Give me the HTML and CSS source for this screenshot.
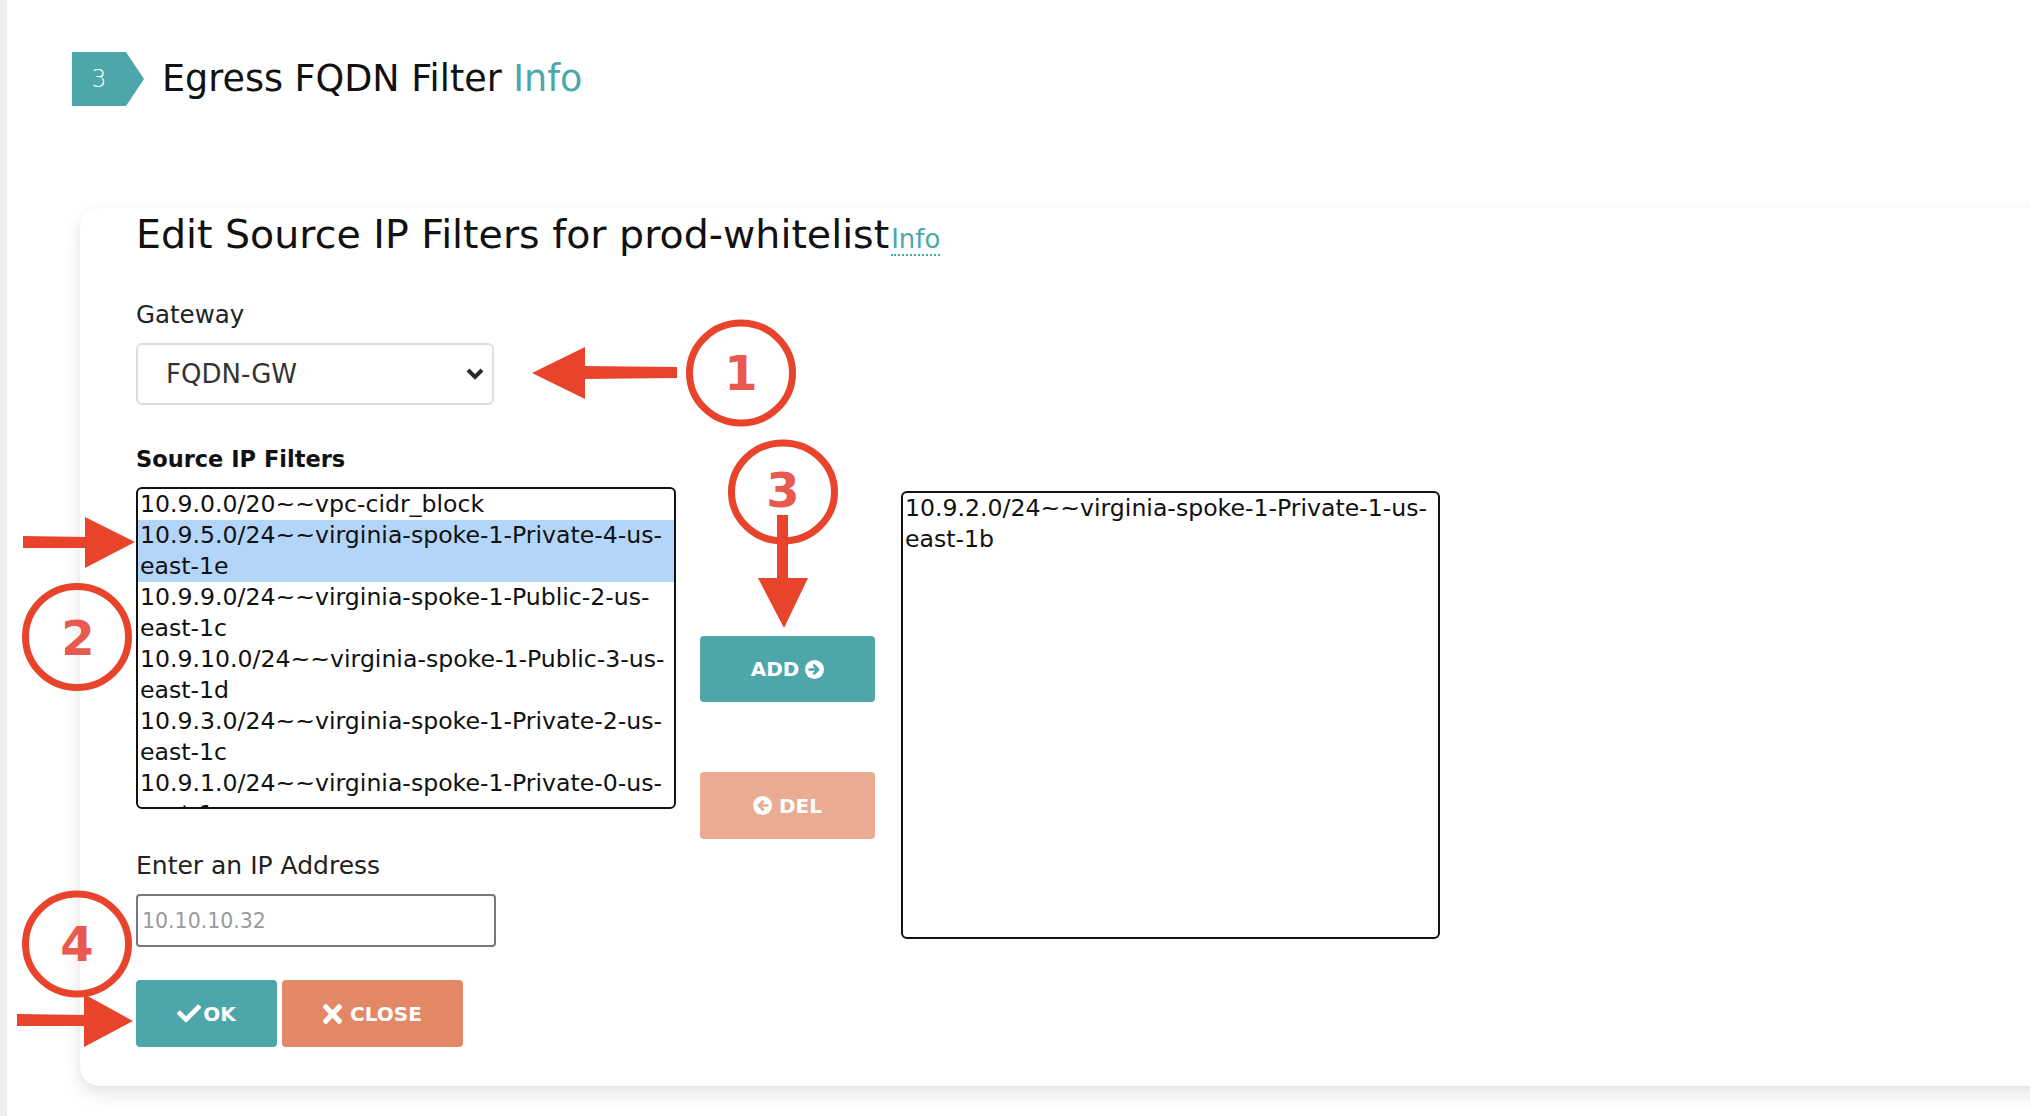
FILE: index.html
```html
<!DOCTYPE html>
<html>
<head>
<meta charset="utf-8">
<title>Egress FQDN Filter</title>
<link rel="stylesheet" href="styles.css">
</head>
<body>
<div class="page">
  <div class="stripe"></div>
  <div class="main">
    <header class="step">
      <div class="badge">3</div>
      <h1 class="step-title">Egress FQDN Filter <span class="info">Info</span></h1>
    </header>

    <section class="card">
      <h2 class="card-title">Edit Source IP Filters for prod-whitelist<a class="info-link">Info</a></h2>

      <div class="field">
        <label class="label">Gateway</label>
        <div class="select">
          <span>FQDN-GW</span>
          <svg class="chev" width="18" height="12" viewBox="0 0 18 12"><polyline points="2,2 9,9 16,2" fill="none" stroke="#2b2b2b" stroke-width="4"/></svg>
        </div>
      </div>

      <div class="filters">
        <div class="col-left">
          <div class="label-bold">Source IP Filters</div>
          <div class="listbox left">
            <div class="opt">10.9.0.0/20~~vpc-cidr_block</div>
            <div class="opt sel">10.9.5.0/24~~virginia-spoke-1-Private-4-us-<br>east-1e</div>
            <div class="opt">10.9.9.0/24~~virginia-spoke-1-Public-2-us-<br>east-1c</div>
            <div class="opt">10.9.10.0/24~~virginia-spoke-1-Public-3-us-<br>east-1d</div>
            <div class="opt">10.9.3.0/24~~virginia-spoke-1-Private-2-us-<br>east-1c</div>
            <div class="opt">10.9.1.0/24~~virginia-spoke-1-Private-0-us-<br>east-1a</div>
          </div>
          <label class="label ip-label">Enter an IP Address</label>
          <input class="ip-input" type="text" placeholder="10.10.10.32">
          <div class="actions">
            <button class="btn ok">
              <svg width="24" height="19" viewBox="0 64 512 384"><path fill="#fff" d="M173.898 439.404l-166.4-166.4c-9.997-9.997-9.997-26.206 0-36.204l36.203-36.204c9.997-9.998 26.207-9.998 36.204 0L192 312.69 432.095 72.596c9.997-9.997 26.207-9.997 36.204 0l36.203 36.204c9.997 9.997 9.997 26.206 0 36.204l-294.4 294.401c-9.998 9.997-26.207 9.997-36.204-.001z"/></svg>
              <span>OK</span>
            </button>
            <button class="btn close">
              <svg width="19" height="22" viewBox="0 64 352 384" preserveAspectRatio="none"><path fill="#fff" d="M242.72 256l100.07-100.07c12.28-12.28 12.28-32.19 0-44.48l-22.24-22.24c-12.28-12.28-32.19-12.28-44.48 0L176 189.28 75.93 89.21c-12.28-12.28-32.19-12.28-44.48 0L9.21 111.45c-12.28 12.28-12.28 32.19 0 44.48L109.28 256 9.21 356.07c-12.28 12.28-12.28 32.19 0 44.48l22.24 22.24c12.28 12.28 32.2 12.28 44.48 0L176 322.72l100.07 100.07c12.28 12.28 32.2 12.28 44.48 0l22.24-22.24c12.28-12.28 12.28-32.19 0-44.48L242.72 256z"/></svg>
              <span>CLOSE</span>
            </button>
          </div>
        </div>

        <div class="col-mid">
          <button class="btn add">
            <span>ADD</span>
            <svg width="19" height="19" viewBox="0 0 20 20"><circle cx="10" cy="10" r="10" fill="#fff"/><path d="M4.8 10h8.6M9.6 5.8l4.2 4.2-4.2 4.2" fill="none" stroke="#4da6a9" stroke-width="2.8" stroke-linecap="round" stroke-linejoin="round"/></svg>
          </button>
          <button class="btn del">
            <svg width="19" height="19" viewBox="0 0 20 20"><circle cx="10" cy="10" r="10" fill="#fff"/><path d="M15.2 10H6.6M10.4 5.8L6.2 10l4.2 4.2" fill="none" stroke="#e9ab91" stroke-width="2.8" stroke-linecap="round" stroke-linejoin="round"/></svg>
            <span>DEL</span>
          </button>
        </div>

        <div class="listbox right">
          <div class="opt">10.9.2.0/24~~virginia-spoke-1-Private-1-us-<br>east-1b</div>
        </div>
      </div>
    </section>
  </div>
</div>

<svg class="annotations" width="2030" height="1116" viewBox="0 0 2030 1116">
  <g fill="none" stroke="#e8432b" stroke-width="7">
    <ellipse cx="741" cy="373" rx="51.5" ry="50"/>
    <ellipse cx="77" cy="637" rx="51.5" ry="50.5"/>
    <ellipse cx="783" cy="492" rx="51.5" ry="49"/>
    <ellipse cx="77" cy="944" rx="51.5" ry="50"/>
  </g>
  <g fill="#e8432b">
    <polygon points="677,367 677,378 582,379 582,366"/>
    <polygon points="532,373 585,347 585,399"/>
    <polygon points="23,536 86,537 86,548 23,548"/>
    <polygon points="85,517 135,542 85,568"/>
    <polygon points="777,515 788,515 788,580 777,580"/>
    <polygon points="758,578 808,578 784,628"/>
    <polygon points="17,1014 86,1015 86,1026 17,1026"/>
    <polygon points="84,994 133,1021 84,1047"/>
  </g>
  <g fill="#e85a4f" font-family="DejaVu Sans, sans-serif" font-weight="bold" font-size="48" text-anchor="middle">
    <text x="741" y="390">1</text>
    <text x="78" y="655">2</text>
    <text x="783" y="507">3</text>
    <text x="77" y="961">4</text>
  </g>
</svg>
</body>
</html>
```

FILE: styles.css
```css
* { box-sizing: border-box; }
html, body { margin: 0; padding: 0; overflow: hidden; background: #fff; }
body {
  position: relative;
  width: 2030px;
  height: 1116px;
  font-family: "DejaVu Sans", sans-serif;
  color: #111;
}
.page { display: flex; min-height: 1116px; }
.stripe { width: 7px; flex: none; background: #efeeea; }
.main { flex: 1; min-width: 0; }

.step { display: flex; align-items: center; height: 54px; margin: 52px 0 0 65px; }
.badge {
  width: 72px; height: 54px; flex: none;
  background: #4da6a9;
  clip-path: polygon(0 0, 54px 0, 72px 27px, 54px 54px, 0 54px);
  color: #fff; font-size: 24px; font-weight: 200;
  display: flex; align-items: center; justify-content: center;
  padding-right: 18px;
}
.step-title { margin: 0 0 0 18px; font-size: 36.5px; font-weight: 400; line-height: 56px; color: #111; white-space: nowrap; }
.info { color: #4aa8ab; }

.card {
  margin: 102px 0 0 73px;
  width: 2100px;
  padding: 2px 0 39px 56px;
  border-radius: 20px;
  background: #fff;
  box-shadow: 0 8px 18px rgba(0,0,0,0.10), 0 0 8px rgba(0,0,0,0.03);
}
.card-title { margin: 0; font-size: 39.5px; font-weight: 400; line-height: 48px; color: #111; white-space: nowrap; }
.info-link { font-size: 26px; color: #4aa8ab; border-bottom: 2px dotted #4aa8ab; margin-left: 2px; }

.field { margin-top: 37px; }
.label { display: block; font-size: 24.5px; line-height: 30px; color: #222; }
.select {
  margin-top: 13px; width: 358px; height: 62px;
  border: 2px solid #dedede; border-radius: 6px;
  display: flex; align-items: center; justify-content: space-between;
  padding: 0 8px 0 28px;
  font-size: 26px; color: #333;
}

.filters { display: flex; align-items: flex-start; margin-top: 40px; }
.col-left { width: 540px; flex: none; }
.label-bold { font-size: 22.5px; font-weight: 700; line-height: 28px; color: #111; }
.listbox {
  border: 2px solid #111; border-radius: 6px; overflow: hidden;
  font-size: 23.6px; line-height: 31px; color: #111; background: #fff;
}
.listbox.left { margin-top: 14px; height: 322px; }
.opt { padding: 0 2px; white-space: nowrap; }
.opt.sel { background: #b4d5fa; }

.ip-label { margin-top: 42px; font-size: 25px; }
.ip-input {
  display: block; margin-top: 13px; width: 360px; height: 53px;
  border: 2px solid #777; border-radius: 4px; padding: 0 4px;
  font-family: inherit; font-size: 20.5px; color: #111; background: #fff; outline: none;
}
.ip-input::placeholder { color: #9a9a9a; }

.actions { display: flex; gap: 5px; margin-top: 33px; }
.btn {
  border: 0; border-radius: 4px; color: #fff;
  font-family: "DejaVu Sans", sans-serif; font-weight: 700; font-size: 20px;
  display: flex; align-items: center; justify-content: center;
  padding: 0; height: 67px;
}
.ok { width: 141px; background: #4da6a9; gap: 2px; }
.close { width: 181px; background: #e38866; gap: 8px; }

.col-mid { width: 175px; margin-left: 24px; flex: none; display: flex; flex-direction: column; }
.add { margin-top: 191px; height: 66px; background: #4da6a9; gap: 6px; }
.del { margin-top: 70px; height: 67px; background: #e9ab91; gap: 7px; }

.listbox.right { margin-left: 26px; margin-top: 46px; width: 539px; height: 448px; flex: none; }

.annotations { position: absolute; left: 0; top: 0; pointer-events: none; }
```
